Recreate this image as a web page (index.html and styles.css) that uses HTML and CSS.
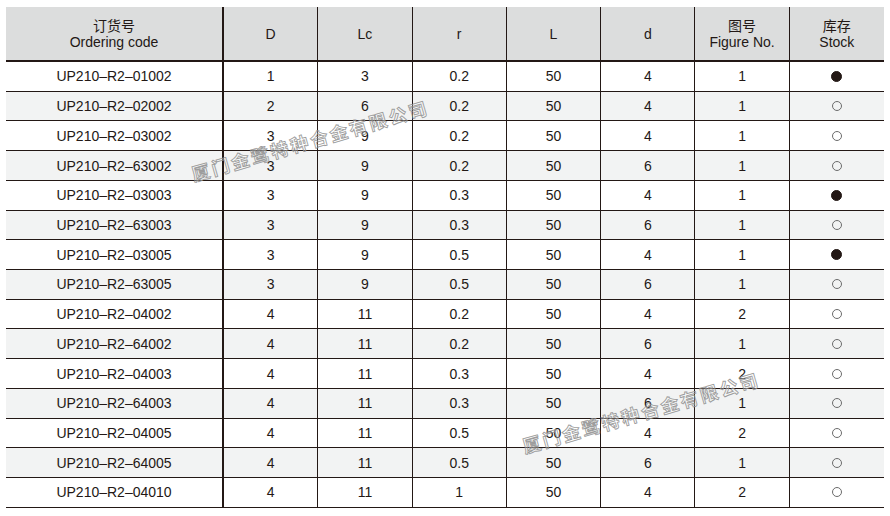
FILE: index.html
```html
<!DOCTYPE html>
<html lang="zh">
<head>
<meta charset="utf-8">
<title>UP210-R2</title>
<link rel="stylesheet" href="styles.css">
</head>
<body>
<div class="sheet">
  <div class="grid">
    <div class="row head">
      <div class="cell first">订货号<br>Ordering code</div>
      <div class="cell">D</div>
      <div class="cell">Lc</div>
      <div class="cell">r</div>
      <div class="cell">L</div>
      <div class="cell">d</div>
      <div class="cell">图号<br>Figure No.</div>
      <div class="cell last">库存<br>Stock</div>
    </div>
    <div class="row"><div class="cell first">UP210–R2–01002</div><div class="cell">1</div><div class="cell">3</div><div class="cell">0.2</div><div class="cell">50</div><div class="cell">4</div><div class="cell">1</div><div class="cell last"><span class="dot full"></span></div></div>
    <div class="row"><div class="cell first">UP210–R2–02002</div><div class="cell">2</div><div class="cell">6</div><div class="cell">0.2</div><div class="cell">50</div><div class="cell">4</div><div class="cell">1</div><div class="cell last"><span class="dot"></span></div></div>
    <div class="row"><div class="cell first">UP210–R2–03002</div><div class="cell">3</div><div class="cell">9</div><div class="cell">0.2</div><div class="cell">50</div><div class="cell">4</div><div class="cell">1</div><div class="cell last"><span class="dot"></span></div></div>
    <div class="row"><div class="cell first">UP210–R2–63002</div><div class="cell">3</div><div class="cell">9</div><div class="cell">0.2</div><div class="cell">50</div><div class="cell">6</div><div class="cell">1</div><div class="cell last"><span class="dot"></span></div></div>
    <div class="row"><div class="cell first">UP210–R2–03003</div><div class="cell">3</div><div class="cell">9</div><div class="cell">0.3</div><div class="cell">50</div><div class="cell">4</div><div class="cell">1</div><div class="cell last"><span class="dot full"></span></div></div>
    <div class="row"><div class="cell first">UP210–R2–63003</div><div class="cell">3</div><div class="cell">9</div><div class="cell">0.3</div><div class="cell">50</div><div class="cell">6</div><div class="cell">1</div><div class="cell last"><span class="dot"></span></div></div>
    <div class="row"><div class="cell first">UP210–R2–03005</div><div class="cell">3</div><div class="cell">9</div><div class="cell">0.5</div><div class="cell">50</div><div class="cell">4</div><div class="cell">1</div><div class="cell last"><span class="dot full"></span></div></div>
    <div class="row"><div class="cell first">UP210–R2–63005</div><div class="cell">3</div><div class="cell">9</div><div class="cell">0.5</div><div class="cell">50</div><div class="cell">6</div><div class="cell">1</div><div class="cell last"><span class="dot"></span></div></div>
    <div class="row"><div class="cell first">UP210–R2–04002</div><div class="cell">4</div><div class="cell">11</div><div class="cell">0.2</div><div class="cell">50</div><div class="cell">4</div><div class="cell">2</div><div class="cell last"><span class="dot"></span></div></div>
    <div class="row"><div class="cell first">UP210–R2–64002</div><div class="cell">4</div><div class="cell">11</div><div class="cell">0.2</div><div class="cell">50</div><div class="cell">6</div><div class="cell">1</div><div class="cell last"><span class="dot"></span></div></div>
    <div class="row"><div class="cell first">UP210–R2–04003</div><div class="cell">4</div><div class="cell">11</div><div class="cell">0.3</div><div class="cell">50</div><div class="cell">4</div><div class="cell">2</div><div class="cell last"><span class="dot"></span></div></div>
    <div class="row"><div class="cell first">UP210–R2–64003</div><div class="cell">4</div><div class="cell">11</div><div class="cell">0.3</div><div class="cell">50</div><div class="cell">6</div><div class="cell">1</div><div class="cell last"><span class="dot"></span></div></div>
    <div class="row"><div class="cell first">UP210–R2–04005</div><div class="cell">4</div><div class="cell">11</div><div class="cell">0.5</div><div class="cell">50</div><div class="cell">4</div><div class="cell">2</div><div class="cell last"><span class="dot"></span></div></div>
    <div class="row"><div class="cell first">UP210–R2–64005</div><div class="cell">4</div><div class="cell">11</div><div class="cell">0.5</div><div class="cell">50</div><div class="cell">6</div><div class="cell">1</div><div class="cell last"><span class="dot"></span></div></div>
    <div class="row"><div class="cell first">UP210–R2–04010</div><div class="cell">4</div><div class="cell">11</div><div class="cell">1</div><div class="cell">50</div><div class="cell">4</div><div class="cell">2</div><div class="cell last"><span class="dot"></span></div></div>

    <div class="mark mark-a">厦门金鹭特种合金有限公司</div>
    <div class="mark mark-b">厦门金鹭特种合金有限公司</div>
  </div>
</div>
</body>
</html>
```

FILE: styles.css
```css
html, body {
  margin: 0;
  padding: 0;
  background: #ffffff;
}

.sheet {
  padding: 7px 6px 0 6px;
  font-family: "Liberation Sans", Arial, "Noto Sans CJK SC", sans-serif;
  font-size: 14px;
  color: #231815;
}

.grid {
  position: relative;
  width: 878px;
  overflow: hidden;
}

.row {
  display: grid;
  grid-template-columns: 218px repeat(7, 1fr);
  height: 29.73px;
  box-sizing: border-box;
  border-bottom: 1px solid #231815;
}

.row:nth-child(odd) {
  background: #f2f3f3;
}

.row.head {
  height: 55px;
  border-bottom: 2px solid #231815;
  background: #dcdddd;
  line-height: 15.5px;
}

.cell {
  display: flex;
  align-items: center;
  justify-content: center;
  text-align: center;
  border-right: 1px solid #231815;
  white-space: nowrap;
}

.cell.first {
  border-right: 2px solid #231815;
}

.cell.last {
  border-right: none;
}

.head .cell {
  padding-top: 2px;
}

.dot {
  display: block;
  width: 10px;
  height: 10px;
  box-sizing: border-box;
  border-radius: 50%;
  border: 1px solid #6b6b6b;
}

.dot.full {
  width: 11px;
  height: 11px;
  background: #231815;
  border-color: #231815;
}

.mark {
  position: absolute;
  font-family: "Noto Sans CJK SC", sans-serif;
  font-weight: 700;
  font-size: 18px;
  line-height: 20px;
  letter-spacing: 2.5px;
  white-space: nowrap;
  color: rgba(255, 255, 255, 0.25);
  -webkit-text-stroke: 0.9px rgba(140, 140, 140, 0.85);
  transform: translate(-50%, -50%) rotate(-16deg);
  pointer-events: none;
}

.mark-a {
  left: 304px;
  top: 133px;
}

.mark-b {
  left: 635px;
  top: 405px;
}
```
